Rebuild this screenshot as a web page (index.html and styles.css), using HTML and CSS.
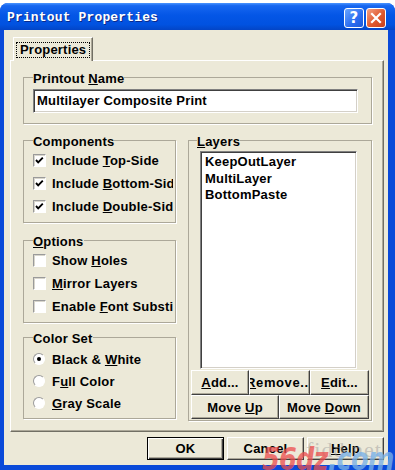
FILE: index.html
```html
<!DOCTYPE html>
<html>
<head>
  <meta charset="utf-8">
  <link rel="stylesheet" href="styles.css">
</head>
<body>
  <div class="window">
    <div class="titlebar">
      <span class="title">Printout Properties</span>
      <span class="capbtn help">?</span>
      <span class="capbtn close">
        <svg width="12" height="12" viewBox="0 0 12 12"><path d="M2 2 L10 10 M10 2 L2 10" stroke="#fff" stroke-width="2.2" stroke-linecap="square"/></svg>
      </span>
    </div>
    <div class="client">
      <div class="tabs">
        <span class="tab"><span class="focus">Properties</span></span>
      </div>
      <div class="panel">
        <fieldset class="group namegroup">
          <legend>Printout <u>N</u>ame</legend>
          <div class="textbox">Multilayer Composite Print</div>
        </fieldset>

        <div class="columns">
          <div class="leftcol">
            <fieldset class="group small">
              <legend>Components</legend>
              <div class="item"><span class="check"><svg width="11" height="11" viewBox="0 0 11 11"><polyline points="2,5 4.2,7.3 8.8,2.7" fill="none" stroke="#000" stroke-width="1.9"/></svg></span><span class="label">Include <u>T</u>op-Side</span></div>
              <div class="item"><span class="check"><svg width="11" height="11" viewBox="0 0 11 11"><polyline points="2,5 4.2,7.3 8.8,2.7" fill="none" stroke="#000" stroke-width="1.9"/></svg></span><span class="label">Include <u>B</u>ottom-Side Print</span></div>
              <div class="item"><span class="check"><svg width="11" height="11" viewBox="0 0 11 11"><polyline points="2,5 4.2,7.3 8.8,2.7" fill="none" stroke="#000" stroke-width="1.9"/></svg></span><span class="label">Include <u>D</u>ouble-Side Print</span></div>
            </fieldset>

            <fieldset class="group small options">
              <legend><u>O</u>ptions</legend>
              <div class="item"><span class="check"></span><span class="label">Show <u>H</u>oles</span></div>
              <div class="item"><span class="check"></span><span class="label"><u>M</u>irror Layers</span></div>
              <div class="item"><span class="check"></span><span class="label">Enable <u>F</u>ont Substitution</span></div>
            </fieldset>

            <fieldset class="group small colorset">
              <legend>Color Set</legend>
              <div class="item"><span class="radio on"></span><span class="label">Black &amp; <u>W</u>hite</span></div>
              <div class="item"><span class="radio"></span><span class="label">F<u>u</u>ll Color</span></div>
              <div class="item"><span class="radio"></span><span class="label"><u>G</u>ray Scale</span></div>
            </fieldset>
          </div>

          <fieldset class="group layers">
            <legend><u>L</u>ayers</legend>
            <div class="listbox">
              <div>KeepOutLayer</div>
              <div>MultiLayer</div>
              <div>BottomPaste</div>
            </div>
            <div class="btnrow first">
              <span class="btn w-add"><span><u>A</u>dd...</span></span>
              <span class="btn w-remove"><span><u>R</u>emove...</span></span>
              <span class="btn w-edit"><span><u>E</u>dit...</span></span>
            </div>
            <div class="btnrow">
              <span class="btn w-up"><span>Move <u>U</u>p</span></span>
              <span class="btn w-down"><span>Move <u>D</u>own</span></span>
            </div>
          </fieldset>
        </div>
      </div>

      <div class="footer">
        <span class="btn big default"><span>OK</span></span>
        <span class="btn big"><span>Cancel</span></span>
        <span class="btn big"><span><u>H</u>elp</span></span>
      </div>
    </div>

    <div class="watermark">
      <span class="wm-grey">fidd.net</span>
      <span class="wm-brand"><span class="wm-red">56dz</span><span class="wm-blue">.com</span></span>
    </div>
  </div>
</body>
</html>
```

FILE: styles.css
```css
body {
  margin: 0;
  background: #fff;
  font-family: "Liberation Sans", Arial, sans-serif;
  font-size: 13px;
  font-weight: bold;
  letter-spacing: 0.2px;
  color: #000;
}

.window {
  position: relative;
  width: 395px;
  height: 467px;
  margin-top: 3px;
  display: flex;
  flex-direction: column;
  background: #0a4ad9;
  border-radius: 8px 8px 0 0;
  overflow: hidden;
}

/* caption */
.titlebar {
  height: 27px;
  box-sizing: border-box;
  flex: none;
  display: flex;
  align-items: center;
  padding: 2px 9px 0 7px;
  background: linear-gradient(#4a94ff 0%, #1767f0 10%, #0456e6 45%, #0152e0 80%, #0345c6 100%);
}
.title {
  font-family: "Liberation Mono", "Courier New", monospace;
  font-size: 13px;
  font-weight: bold;
  color: #fff;
  text-shadow: 1px 1px 0 #0b2a8a;
  letter-spacing: 0.15px;
}
.capbtn {
  width: 20px;
  height: 20px;
  box-sizing: border-box;
  border: 1px solid #fff;
  border-radius: 3px;
  display: flex;
  align-items: center;
  justify-content: center;
}
.help {
  margin-left: auto;
  background: linear-gradient(135deg, #6aa6ff, #2a6cf0 60%, #1d58d8);
  color: #fff;
  font-family: "DejaVu Sans", sans-serif;
  font-size: 15px;
}
.close {
  margin-left: 2px;
  background: linear-gradient(135deg, #f3a184, #e0592f 55%, #c8401c);
}

/* dialog body */
.client {
  flex: 1;
  margin: 0 7px 5px 4px;
  padding: 7px 4px 0 6px;
  background: #ece9d8;
}

.tabs {
  display: flex;
  padding-left: 3px;
}
.tab {
  position: relative;
  z-index: 1;
  height: 24px;
  margin-bottom: -1px;
  padding: 4px 2px 0 2px;
  box-sizing: border-box;
  background: #ece9d8;
  border: 1px solid #fff;
  border-right-color: #716f64;
  border-bottom: none;
  box-shadow: inset -1px 0 0 #aca899;
}
.focus {
  display: block;
  border: 1px dotted #000;
  padding: 0 3px 0 3px;
  line-height: 14px;
}

.panel {
  height: 372px;
  box-sizing: border-box;
  padding: 8px 11px 0 12px;
  border: 1px solid #fff;
  border-right-color: #716f64;
  border-bottom-color: #716f64;
  box-shadow: inset -1px -1px 0 #aca899;
}

.group {
  margin: 0;
  border: 1px solid #aca899;
  box-shadow: 1px 1px 0 #fff;
  min-width: 0;
}
.group legend {
  padding: 3px 0 0 0;
  line-height: 14px;
}

.namegroup {
  padding: 3px 13px 10px 9px;
}
.textbox {
  height: 24px;
  box-sizing: border-box;
  padding-left: 3px;
  line-height: 21px;
  background: #fff;
  border: 1px solid;
  border-color: #808080 #fff #fff #808080;
  box-shadow: inset 1px 1px 0 #404040, inset -1px -1px 0 #d4d0c8;
  white-space: nowrap;
  overflow: hidden;
}

.columns {
  display: flex;
  gap: 12px;
  margin-top: 8px;
}
.leftcol {
  width: 153px;
  display: flex;
  flex-direction: column;
}

.small {
  padding: 0 2px 4px 9px;
}
.options {
  margin-top: 9px;
}
.colorset {
  margin-top: 6px;
  padding-top: 2px;
}
.item {
  height: 23px;
  display: flex;
  align-items: center;
}
.colorset .item {
  height: 22px;
}
.label {
  white-space: nowrap;
  overflow: hidden;
}
.check {
  flex: none;
  width: 13px;
  height: 13px;
  box-sizing: border-box;
  margin-right: 6px;
  background: #fff;
  border: 1px solid;
  border-color: #9a9a9a #fff #fff #9a9a9a;
  box-shadow: inset 1px 1px 0 #d8d6cc;
  display: flex;
}
.radio {
  flex: none;
  width: 12px;
  height: 12px;
  box-sizing: border-box;
  margin-right: 7px;
  border-radius: 50%;
  background: #fff;
  border: 1px solid;
  border-color: #9a9a9a #fff #fff #9a9a9a;
  display: flex;
  align-items: center;
  justify-content: center;
}
.radio.on::after {
  content: "";
  width: 4px;
  height: 4px;
  border-radius: 50%;
  background: #000;
}

.layers {
  width: 184px;
  box-sizing: border-box;
  padding: 2px 2px 1px 2px;
}
.layers legend {
  margin-left: 6px;
}
.listbox {
  height: 218px;
  box-sizing: border-box;
  margin: 0 12px 0 9px;
  padding: 2px 4px;
  line-height: 16.5px;
  background: #fff;
  border: 1px solid;
  border-color: #808080 #fff #fff #808080;
  box-shadow: inset 1px 1px 0 #404040, inset -1px -1px 0 #d4d0c8;
}
.btnrow {
  display: flex;
  height: 24px;
}
.btnrow.first {
  height: 25px;
  margin-top: 1px;
}

.btn {
  box-sizing: border-box;
  display: flex;
  align-items: center;
  justify-content: center;
  overflow: hidden;
  white-space: nowrap;
  background: #ece9d8;
  border: 1px solid;
  border-color: #fff #404040 #404040 #fff;
  box-shadow: inset -1px -1px 0 #aca899;
}
.w-add { width: 58px; }
.w-remove { width: 61px; letter-spacing: 0.6px; }
.w-edit { width: 59px; }
.w-up { width: 88px; }
.w-down { width: 90px; }

.footer {
  display: flex;
  justify-content: flex-end;
  gap: 3px;
  margin-top: 5px;
}
.big {
  width: 77px;
  height: 23px;
}
.default {
  border-color: #000;
  box-shadow: inset 1px 1px 0 #fff, inset -1px -1px 0 #404040, inset -2px -2px 0 #aca899;
}

/* site watermark burned into the capture */
.watermark {
  position: absolute;
  left: 262px;
  top: 428px;
  width: 160px;
  height: 45px;
  font-family: "DejaVu Sans", sans-serif;
  font-weight: bold;
  letter-spacing: 0;
  white-space: nowrap;
  pointer-events: none;
}
.wm-grey {
  position: absolute;
  left: 44px;
  top: 6px;
  font-family: "Liberation Serif", serif;
  font-weight: normal;
  font-size: 22px;
  color: rgba(150, 150, 150, 0.45);
  letter-spacing: 1px;
}
.wm-brand {
  display: inline-block;
  margin-top: 9px;
  font-size: 32px;
  font-style: italic;
  letter-spacing: -1px;
  transform: scaleX(0.8);
  transform-origin: left center;
}
.wm-red {
  color: rgba(236, 78, 78, 0.75);
}
.wm-blue {
  color: rgba(120, 176, 232, 0.8);
}
```
